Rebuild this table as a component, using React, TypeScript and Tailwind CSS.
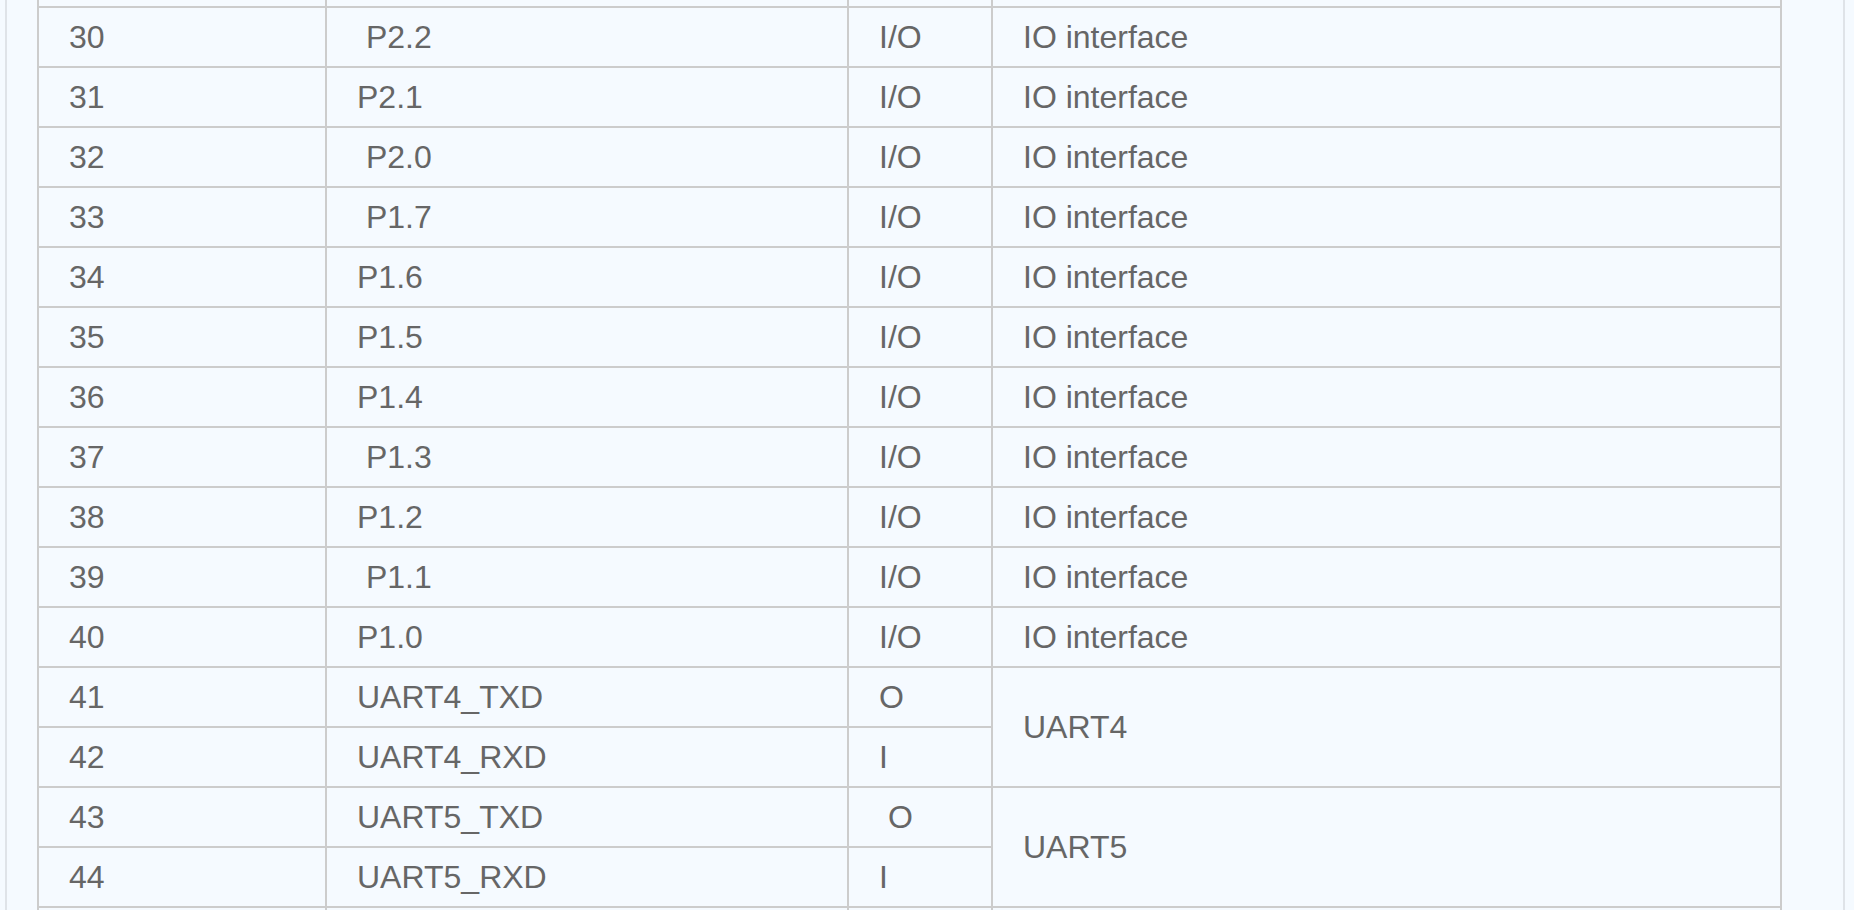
import React from "react";

type Row = { n: string; name: string; dir: string; desc?: string; span?: boolean };

const rows: Row[] = [
  { n: "30", name: " P2.2", dir: "I/O", desc: "IO interface" },
  { n: "31", name: "P2.1", dir: "I/O", desc: "IO interface" },
  { n: "32", name: " P2.0", dir: "I/O", desc: "IO interface" },
  { n: "33", name: " P1.7", dir: "I/O", desc: "IO interface" },
  { n: "34", name: "P1.6", dir: "I/O", desc: "IO interface" },
  { n: "35", name: "P1.5", dir: "I/O", desc: "IO interface" },
  { n: "36", name: "P1.4", dir: "I/O", desc: "IO interface" },
  { n: "37", name: " P1.3", dir: "I/O", desc: "IO interface" },
  { n: "38", name: "P1.2", dir: "I/O", desc: "IO interface" },
  { n: "39", name: " P1.1", dir: "I/O", desc: "IO interface" },
  { n: "40", name: "P1.0", dir: "I/O", desc: "IO interface" },
  { n: "41", name: "UART4_TXD", dir: "O", desc: "UART4", span: true },
  { n: "42", name: "UART4_RXD", dir: "I" },
  { n: "43", name: "UART5_TXD", dir: " O", desc: "UART5", span: true },
  { n: "44", name: "UART5_RXD", dir: "I" },
];

function Cell({ children, span }: { children?: React.ReactNode; span?: boolean }) {
  return (
    <div
      className={
        span
          ? "row-span-2 flex items-center border-l-2 border-t-2 border-[#cccccc] pl-[30px] pb-[1px] whitespace-pre"
          : "flex items-center border-l-2 border-t-2 border-[#cccccc] pl-[30px] pb-[1px] whitespace-pre"
      }
    >
      {children}
    </div>
  );
}

export default function App() {
  return (
    <div
      className="h-[910px] w-full overflow-hidden bg-[#f5faff] text-[32px] leading-none text-[#666666]"
      style={{ fontFamily: '"Liberation Sans", Arial, Helvetica, sans-serif' }}
    >
      <div className="ml-[5px] h-full w-[1840px] border-x-2 border-[#dfe3e8] pl-[30px]">
        <div className="grid w-[1745px] grid-cols-[288px_522px_144px_789px] grid-rows-[6px_repeat(15,60px)_40px] border-r-2 border-[#cccccc]">
          <div className="border-l-2 border-[#cccccc]" />
          <div className="border-l-2 border-[#cccccc]" />
          <div className="border-l-2 border-[#cccccc]" />
          <div className="border-l-2 border-[#cccccc]" />
          {rows.map((r) => (
            <React.Fragment key={r.n}>
              <Cell>{r.n}</Cell>
              <Cell>{r.name}</Cell>
              <Cell>{r.dir}</Cell>
              {r.desc !== undefined && <Cell span={r.span}>{r.desc}</Cell>}
            </React.Fragment>
          ))}
          <div className="border-l-2 border-t-2 border-[#cccccc]" />
          <div className="border-l-2 border-t-2 border-[#cccccc]" />
          <div className="border-l-2 border-t-2 border-[#cccccc]" />
          <div className="border-l-2 border-t-2 border-[#cccccc]" />
        </div>
      </div>
    </div>
  );
}
